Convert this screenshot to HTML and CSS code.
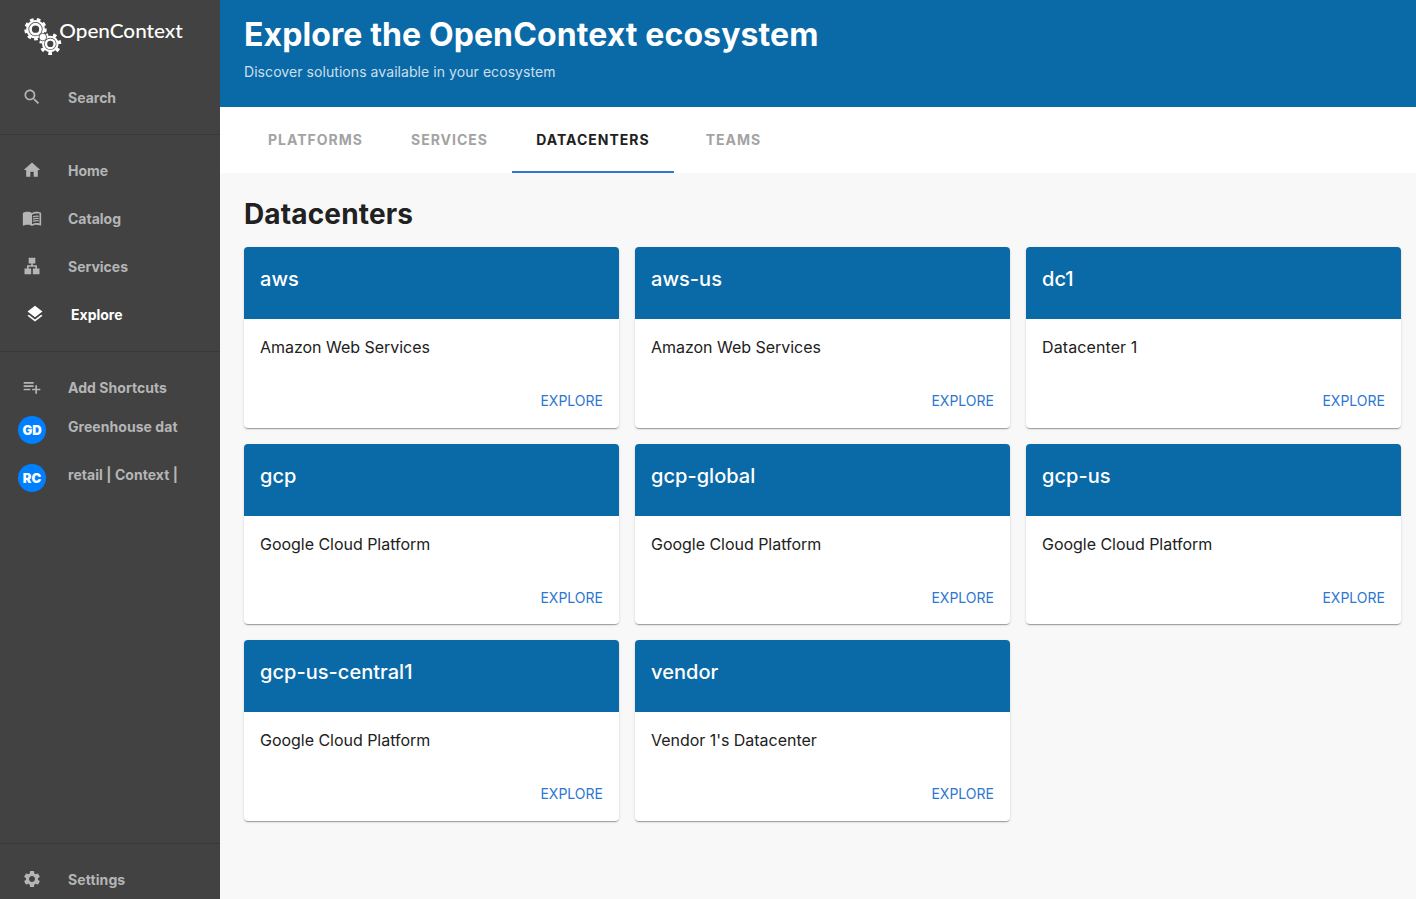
FILE: index.html
```html
<!DOCTYPE html>
<html lang="en">
<head>
<meta charset="utf-8">
<title>Explore | OpenContext</title>
<link rel="stylesheet" href="styles.css">
</head>
<body>
<div class="app">
  <nav class="sidebar">
    <a class="logo">
      <svg class="logo-art" width="162" height="42" viewBox="22 16 162 42">
        <g fill="none" stroke="#fff">
          <circle cx="35.5" cy="29.2" r="9.9" stroke-width="2.6" stroke-dasharray="3.7 3.21" transform="rotate(-4 35.5 29.2)"/>
          <circle cx="35.5" cy="29.2" r="8.2" stroke-width="2.2"/>
          <circle cx="35.5" cy="29.2" r="5" stroke-width="2.7"/>
          <circle cx="50.3" cy="43.9" r="9.4" stroke-width="3.2" stroke-dasharray="3.6 4.84" transform="rotate(28 50.3 43.9)"/>
          <circle cx="50.3" cy="43.9" r="7.2" stroke-width="2.1"/>
          <circle cx="50.3" cy="43.9" r="4.3" stroke-width="2.4"/>
        </g>
        <circle cx="42.8" cy="37.1" r="3.8" fill="#fff" stroke="#424242" stroke-width=".8"/>
        <text class="logo-text" x="59.3" y="38" textLength="123.500" lengthAdjust="spacingAndGlyphs">OpenContext</text>
      </svg>
    </a>
    <a class="item search"><span class="icon"><svg width="20" height="20" viewBox="0 0 24 24"><path d="M15.5 14h-.79l-.28-.27C15.41 12.59 16 11.11 16 9.5 16 5.91 13.09 3 9.5 3S3 5.91 3 9.5 5.91 16 9.5 16c1.61 0 3.09-.59 4.23-1.57l.27.28v.79l5 4.99L20.49 19l-4.99-5zm-6 0C7.01 14 5 11.99 5 9.5S7.01 5 9.5 5 14 7.01 14 9.5 11.99 14 9.5 14z"/></svg></span><span>Search</span></a>
    <hr>
    <a class="item"><span class="icon"><svg width="20" height="20" viewBox="0 0 24 24"><path d="M10 20v-6h4v6h5v-8h3L12 3 2 12h3v8z"/></svg></span><span>Home</span></a>
    <a class="item"><span class="icon"><svg width="20" height="20" viewBox="0 0 24 24"><path d="M21 5c-1.11-.35-2.33-.5-3.5-.5-1.95 0-4.05.4-5.5 1.5-1.45-1.1-3.55-1.5-5.5-1.5S2.450 4.9 1 6v14.650c0 .25.25.5.5.5.1 0 .15-.05.25-.05C3.100 20.450 5.050 20 6.500 20c1.950 0 4.050.4 5.500 1.500 1.350-.85 3.800-1.500 5.500-1.500 1.650 0 3.350.3 4.750 1.050.1.05.15.05.25.05.25 0 .5-.25.5-.5V6c-.6-.45-1.250-.75-2-1zm0 13.500c-1.100-.35-2.300-.5-3.500-.5-1.700 0-4.150.65-5.500 1.500V8c1.350-.85 3.800-1.500 5.500-1.500 1.200 0 2.400.15 3.500.5v11.500z"/><path d="M17.500 10.500c.88 0 1.730.09 2.500.26V9.240c-.79-.15-1.640-.24-2.500-.24-1.700 0-3.240.29-4.500.83v1.660c1.130-.64 2.700-.99 4.500-.99zM13 12.490v1.660c1.130-.64 2.700-.99 4.500-.99.88 0 1.730.09 2.500.26V11.900c-.79-.15-1.640-.24-2.500-.24-1.700 0-3.240.3-4.500.83zM17.500 14.330c-1.700 0-3.240.29-4.500.83v1.660c1.130-.64 2.700-.99 4.500-.99.88 0 1.730.09 2.500.26v-1.520c-.79-.16-1.640-.24-2.500-.24z"/></svg></span><span>Catalog</span></a>
    <a class="item"><span class="icon"><svg width="20" height="20" viewBox="0 0 24 24"><path d="M13 22h8v-7h-3v-4h-5V9h3V2H8v7h3v2H6v4H3v7h8v-7H8v-2h8v2h-3z"/></svg></span><span>Services</span></a>
    <a class="item active"><span class="icon"><svg width="20" height="20" viewBox="0 0 24 24"><path d="M11.990 18.540l-7.370-5.730L3 14.070l9 7 9-7-1.630-1.270-7.380 5.740zM12 16l7.360-5.730L21 9l-9-7-9 7 1.630 1.270L12 16z"/></svg></span><span>Explore</span></a>
    <hr>
    <a class="item shortcuts"><span class="icon"><svg width="20" height="20" viewBox="0 0 24 24"><path d="M14 10H2v2h12v-2zm0-4H2v2h12V6zm4 8v-4h-2v4h-4v2h4v4h2v-4h4v-2h-4zM2 16h8v-2H2v2z"/></svg></span><span>Add Shortcuts</span></a>
    <a class="item pinned"><span class="icon"><b class="avatar">GD</b></span><span class="pin-label">Greenhouse dat</span></a>
    <a class="item pinned"><span class="icon"><b class="avatar">RC</b></span><span class="pin-label">retail | Context |</span></a>
    <div class="spacer"></div>
    <hr>
    <a class="item settings"><span class="icon"><svg width="20" height="20" viewBox="0 0 24 24"><path d="M19.140 12.940c.04-.3.06-.61.06-.94 0-.32-.02-.64-.07-.94l2.030-1.580c.18-.14.23-.41.12-.61l-1.920-3.320c-.12-.22-.37-.29-.59-.22l-2.390.96c-.5-.38-1.030-.7-1.620-.94l-.36-2.540c-.04-.24-.24-.41-.48-.41h-3.840c-.24 0-.43.17-.47.41l-.36 2.540c-.59.24-1.130.57-1.620.94l-2.390-.96c-.22-.08-.47 0-.59.22L2.740 8.870c-.12.21-.08.47.12.61l2.030 1.580c-.05.3-.09.63-.09.94s.02.64.07.94l-2.030 1.580c-.18.14-.23.41-.12.61l1.920 3.320c.12.22.37.29.59.22l2.390-.96c.5.38 1.030.7 1.620.94l.36 2.540c.05.24.24.41.48.41h3.840c.24 0 .44-.17.47-.41l.36-2.540c.59-.24 1.130-.56 1.620-.94l2.390.96c.22.08.47 0 .59-.22l1.920-3.320c.12-.22.07-.47-.12-.61l-2.010-1.580zM12 15.600c-1.980 0-3.600-1.620-3.600-3.600s1.620-3.600 3.600-3.600 3.600 1.620 3.600 3.600-1.620 3.600-3.600 3.600z"/></svg></span><span>Settings</span></a>
  </nav>
  <main class="main">
    <header class="header">
      <h1>Explore the OpenContext ecosystem</h1>
      <p>Discover solutions available in your ecosystem</p>
    </header>
    <div class="tabs">
      <a class="tab platforms">PLATFORMS</a>
      <a class="tab services">SERVICES</a>
      <a class="tab datacenters selected">DATACENTERS</a>
      <a class="tab teams">TEAMS</a>
    </div>
    <section class="content">
      <h2>Datacenters</h2>
      <div class="grid">
        <article class="card"><h3>aws</h3><p>Amazon Web Services</p><a class="explore">EXPLORE</a></article>
        <article class="card"><h3>aws-us</h3><p>Amazon Web Services</p><a class="explore">EXPLORE</a></article>
        <article class="card"><h3>dc1</h3><p class="loose">Datacenter 1</p><a class="explore">EXPLORE</a></article>
        <article class="card"><h3>gcp</h3><p>Google Cloud Platform</p><a class="explore">EXPLORE</a></article>
        <article class="card"><h3>gcp-global</h3><p>Google Cloud Platform</p><a class="explore">EXPLORE</a></article>
        <article class="card"><h3>gcp-us</h3><p>Google Cloud Platform</p><a class="explore">EXPLORE</a></article>
        <article class="card"><h3>gcp-us-central1</h3><p>Google Cloud Platform</p><a class="explore">EXPLORE</a></article>
        <article class="card"><h3>vendor</h3><p>Vendor 1's Datacenter</p><a class="explore">EXPLORE</a></article>
      </div>
    </section>
  </main>
</div>
</body>
</html>
```
FILE: styles.css
```css
* { box-sizing: border-box; }
body { margin: 0; font-family: Inter, "Liberation Sans", sans-serif; color: #212121; }
h1, h2, h3, p { margin: 0; }
.app { display: flex; height: 899px; overflow: hidden; background: #f8f8f8; }

.sidebar { width: 220px; flex: none; display: flex; flex-direction: column; background: #424242; color: #b5b5b5; }
.sidebar hr { width: 100%; height: 1px; flex: none; margin: 12px 0; border: 0; background: #383838; }
.logo { height: 74px; flex: none; padding: 16px 0 0 22px; }
.logo-art { display: block; }
.logo-text { font: 500 19px Lato, sans-serif; fill: #fff; }
.item { display: flex; align-items: center; height: 48px; flex: none; font-size: 14px; font-weight: 700; line-height: 20px; white-space: nowrap; }
.item > span:last-child { padding-bottom: 1px; }
.icon { width: 64px; margin-right: 4px; display: flex; justify-content: center; padding-bottom: 3px; }
.icon svg { display: block; fill: currentColor; }
.active { padding-left: 3px; color: #fff; }
.shortcuts { margin-bottom: -6px; letter-spacing: .05px; }
.pinned { letter-spacing: .05px; }
.pinned .icon { padding-bottom: 0; }
.item > .pin-label:last-child { padding-bottom: 7px; }
.avatar { width: 28px; height: 28px; border-radius: 50%; background: #0080ff; color: #fff; font-size: 13px; line-height: 28px; text-align: center; letter-spacing: 0; }
.spacer { flex: 1; }
.settings { margin-bottom: -5px; letter-spacing: .1px; }

.main { flex: 1; min-width: 0; }
.header { height: 107px; padding: 15px 24px 0; background: #0a69a7; color: #fff; }
.header h1 { font-size: 32px; line-height: 40px; font-weight: 700; letter-spacing: .1px; }
.header p { margin-top: 7px; font-size: 14px; line-height: 20px; letter-spacing: .065px; color: rgba(255, 255, 255, .8); }
.tabs { display: flex; height: 66px; padding-left: 24px; background: #fff; }
.tab { display: flex; justify-content: center; align-items: center; font-size: 14px; font-weight: 700; letter-spacing: 1px; color: #a3a3a3; border-bottom: 2px solid transparent; }
.platforms { width: 143px; }
.services { width: 125px; }
.datacenters { width: 162px; }
.teams { width: 119px; }
.selected { color: #212121; border-color: #2e77d0; }
.content { padding: 24px 15px 0 24px; }
.content h2 { font-size: 28px; line-height: 34px; font-weight: 700; letter-spacing: .15px; margin-bottom: 16px; }
.grid { display: grid; grid-template-columns: repeat(3, 375px); gap: 16px; }
.card { height: 180.5px; display: flex; flex-direction: column; border-radius: 4px; background: #fff; overflow: hidden; box-shadow: 0 2px 1px -1px rgba(0,0,0,.2), 0 1px 1px rgba(0,0,0,.14), 0 1px 3px rgba(0,0,0,.12); }
.card h3 { height: 72px; padding: 16px; background: #0a69a7; color: #fff; font-size: 20px; line-height: 32px; font-weight: 500; letter-spacing: .03px; }
.card p { padding: 16px 16px 0; font-size: 16px; line-height: 24px; letter-spacing: -.03px; }
.card .loose { letter-spacing: .1px; }
.explore { align-self: flex-end; margin: 30px 16px 0; font-size: 14px; line-height: 24px; color: #2e77d0; }
```
